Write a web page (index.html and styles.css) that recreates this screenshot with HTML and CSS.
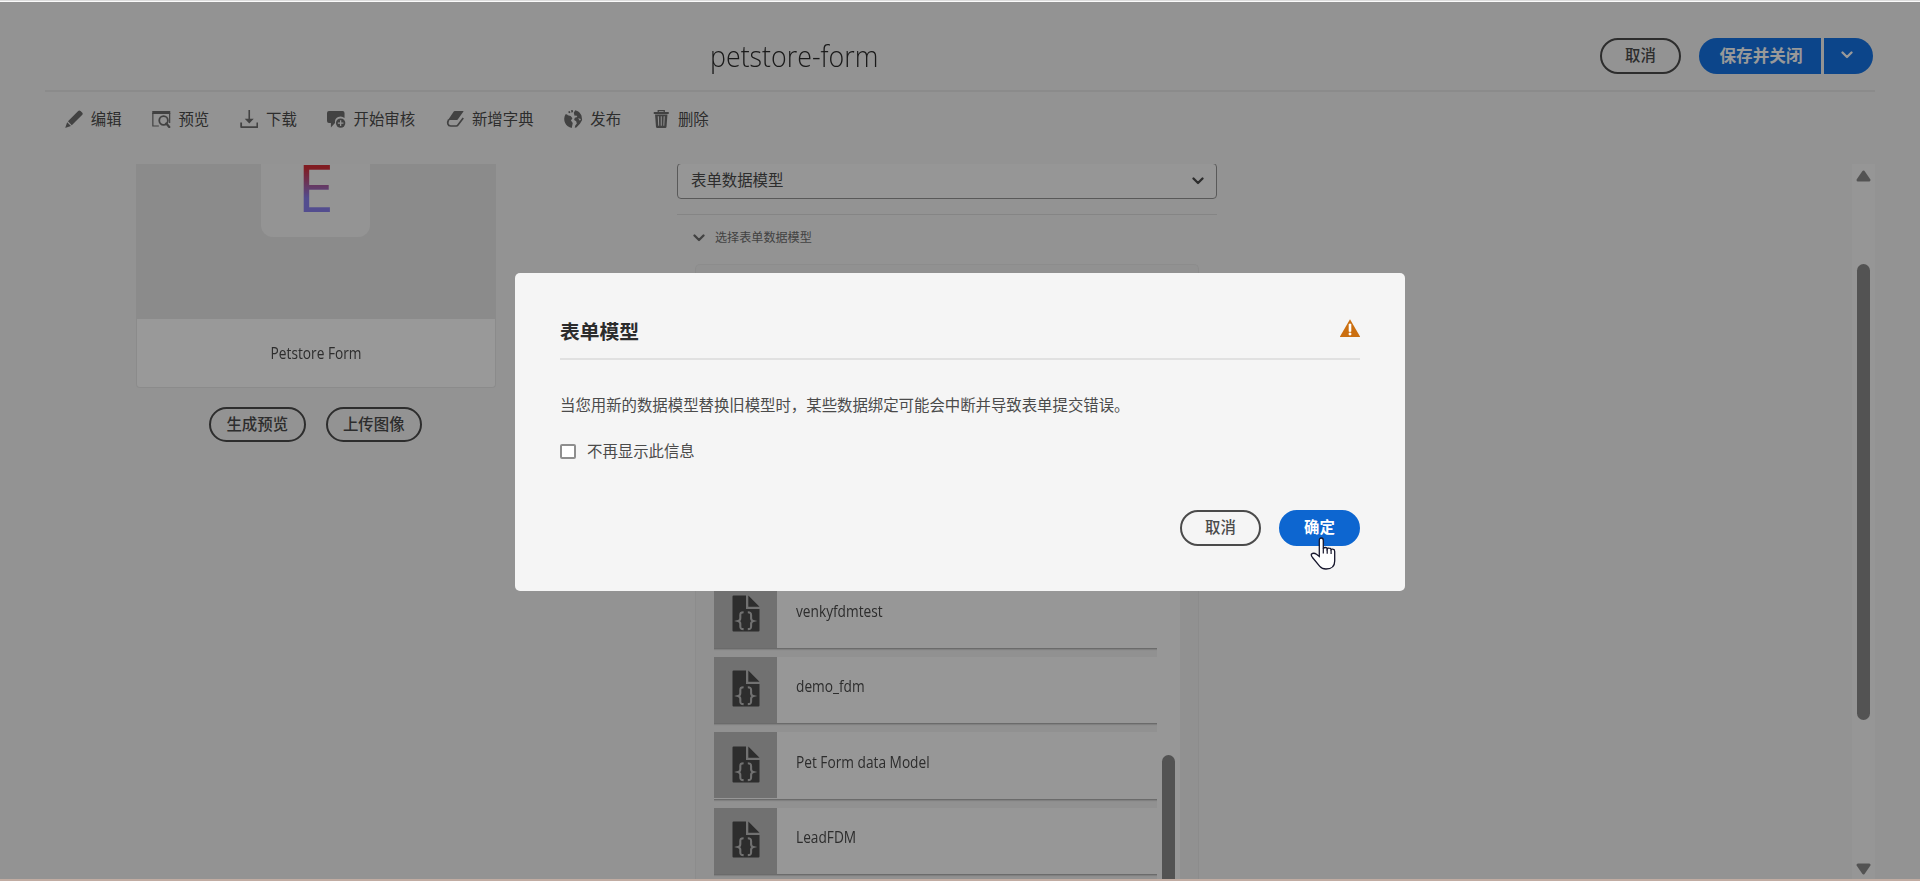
FILE: index.html
```html
<!DOCTYPE html>
<html lang="zh-CN">
<head>
<meta charset="utf-8">
<title>petstore-form</title>
<link rel="stylesheet" href="styles.css">
</head>
<body>
<svg class="defs" width="0" height="0">
  <symbol id="chevron" viewBox="0 0 12 8"><path d="M1.500 1.500 6 6l4.500-4.500" fill="none" stroke="currentColor" stroke-width="2.300" stroke-linecap="round" stroke-linejoin="round"/></symbol>
  <symbol id="file" viewBox="0 0 28 37">
    <path d="M1.500.500H14v13.500h13.500v21.500a1 1 0 0 1-1 1h-25a1 1 0 0 1-1-1v-34a1 1 0 0 1 1-1z" fill="#4b4b4b"/>
    <path d="M16.300.500 27.500 11.800H16.300z" fill="#4b4b4b"/>
    <path d="M11.600 17.200c-3 0-3.300 1-3.300 3v3c0 1.500-.5 2.300-2.300 2.800 1.800.5 2.300 1.300 2.300 2.800v2.400c0 2 .3 2.900 3.300 2.900M15.800 17.200c3 0 3.300 1 3.300 3v3c0 1.500.5 2.300 2.300 2.800-1.800.5-2.300 1.300-2.300 2.800v2.400c0 2-.3 2.900-3.300 2.900" fill="none" stroke="#bcbcbc" stroke-width="2.100"/>
  </symbol>
</svg>
<div class="page">
  <header class="header">
    <h1 class="title"><span>petstore-form</span></h1>
    <div class="header-actions">
      <button class="btn">取消</button>
      <div class="split">
        <button class="split-main">保存并关闭</button>
        <button class="split-more"><svg width="12" height="8"><use href="#chevron"/></svg></button>
      </div>
    </div>
  </header>

  <nav class="toolbar">
    <a class="tool"><svg width="18" height="18" viewBox="0 0 18 18"><path d="M12.700 1.200Q14 0 15.300 1.100l1.500 1.500q1.300 1.200 0 2.500L6.500 15.200 2.700 11.300z"/><path d="M1.900 12.200l3.800 3.700L.500 17.800Q0 17.900.100 17.400z"/></svg>编辑</a>
    <a class="tool"><svg width="18" height="18" viewBox="0 0 18 18"><path d="M0 1h18v3H0z"/><path d="M.6 3v13h6M17.400 3v10" fill="none" stroke="#6e6e6e" stroke-width="1.200"/><circle cx="11.300" cy="10.500" r="4.300" fill="none" stroke="#6e6e6e" stroke-width="1.800"/><path d="M14 13.500l3 3.400" stroke="#6e6e6e" stroke-width="2.300" stroke-linecap="round"/></svg>预览</a>
    <a class="tool"><svg width="18" height="18" viewBox="0 0 18 18"><path d="M8.200 0h1.600v8.700h3.700L9 13.500 4.500 8.700h3.700zM0 12.500h1.800v3.700h14.400v-3.700H18V17q0 1-1 1H1q-1 0-1-1z"/></svg>下载</a>
    <a class="tool"><svg width="19" height="18" viewBox="0 0 19 18"><path d="M2 .8h14q2 0 2 2v5.300A5.800 5.800 0 0 0 8.200 13L4 17.800V13H2q-2 0-2-2V2.800q0-2 2-2z"/><circle cx="14" cy="13.200" r="4.800"/><path d="M14 10.300v5.800M11.100 13.200h5.800" stroke="#f5f5f5" stroke-width="1.300"/></svg>开始审核</a>
    <a class="tool"><svg width="17" height="18" viewBox="0 0 17 18"><path d="M8 1h8.500q.4.200.2.600L11 9.500q-.6.600-1.200.6H2.200q-.8-.1-.4-.8L7 1.600Q7.400 1 8 1z"/><path d="M2 9.500C0 13 1 16 4 16h5.500q1 0 1.700-1L16.500 8" fill="none" stroke="#6e6e6e" stroke-width="1.700"/></svg>新增字典</a>
    <a class="tool"><svg width="18" height="18" viewBox="0 0 18 18"><path d="M1.300 4.300Q3 4 3.600 5.200L6.400 6l1.800 2.300-1.500 2.300 1.800 2.400-1 4.900A9 9 0 0 1 1.300 4.300z"/><path d="M6.700.3 8.500 0l.3 1.900-1.500.8zM3.800 1.700l1.700-.8.700 1.800-1.400.6z"/><path d="M9.500 2.800 11 .2A9 9 0 0 1 17.200 5.500l.7 4.500-2.200 3.700-3.600 3.800-1.600.3.500-2.300 1.600-2.100-.7-2.200-2-1.300.6-2.100 2.600-.8-1-1.400-1.800.1z"/><path d="M13.800 8.200l1.900 2.600 1-1.700z" fill="#f5f5f5"/></svg>发布</a>
    <a class="tool"><svg width="16" height="18" viewBox="0 0 16 18"><path d="M5 2V.6h6V2" fill="none" stroke="#6e6e6e" stroke-width="1.300"/><path d="M.5 2h15v2H.500z"/><path fill-rule="evenodd" d="M1.800 4.500h12.400l-.9 12q-.1 1.500-1.300 1.500H4q-1.200 0-1.300-1.500zM4.500 6.300l.5 9.500h.9l-.3-9.500zM7.500 6.300v9.500h1V6.300zM10.400 6.300l-.3 9.500h.9l.5-9.500z"/></svg>删除</a>
  </nav>

  <main class="content">
    <section class="side">
      <div class="card">
        <div class="card-cover"><div class="tile"><span class="tile-letter">E</span></div></div>
        <div class="card-name"><span class="latin latin-center">Petstore Form</span></div>
      </div>
      <div class="side-actions">
        <button class="btn btn-side">生成预览</button>
        <button class="btn btn-side">上传图像</button>
      </div>
    </section>

    <section class="model">
      <div class="select">表单数据模型<svg width="12" height="8"><use href="#chevron"/></svg></div>
      <div class="accordion"><svg width="12" height="8"><use href="#chevron"/></svg>选择表单数据模型</div>
      <div class="panel">
        <div class="list">
          <div class="rows">
            <div class="row"><div class="row-card"><div class="thumb"><svg width="28" height="37"><use href="#file"/></svg></div><span class="latin">venkyfdmtest</span></div></div>
            <div class="row"><div class="row-card"><div class="thumb"><svg width="28" height="37"><use href="#file"/></svg></div><span class="latin">demo_fdm</span></div></div>
            <div class="row"><div class="row-card"><div class="thumb"><svg width="28" height="37"><use href="#file"/></svg></div><span class="latin">Pet Form data Model</span></div></div>
            <div class="row"><div class="row-card"><div class="thumb"><svg width="28" height="37"><use href="#file"/></svg></div><span class="latin">LeadFDM</span></div></div>
          </div>
          <div class="list-thumb"></div>
        </div>
      </div>
    </section>

    <div class="scrollbar">
      <svg width="15" height="12" viewBox="0 0 15 12"><path d="M7.500 2 13 10H2z"/></svg>
      <div class="scroll-thumb"></div>
      <svg class="arrow-down" width="15" height="12" viewBox="0 0 15 12"><path d="M7.500 10 13 2H2z"/></svg>
    </div>
  </main>
</div>

<div class="overlay">
  <div class="dialog">
    <div class="dialog-head">
      <h2>表单模型</h2>
      <svg width="20" height="18" viewBox="0 0 20 18"><path d="M10 .300 20 17.500V18H0v-.500z" fill="#cb6f10"/><path d="M9 5h2v7.500H9zM9 14h2v2H9z" fill="#fff" stroke="#fff" stroke-width=".6"/></svg>
    </div>
    <p class="dialog-text">当您用新的数据模型替换旧模型时，某些数据绑定可能会中断并导致表单提交错误。</p>
    <label class="check"><span class="box"></span><span class="check-label">不再显示此信息</span></label>
    <div class="dialog-actions">
      <button class="btn">取消</button>
      <button class="btn btn-primary">确定</button>
    </div>
  </div>
</div>
<svg class="cursor" width="27" height="34" viewBox="0 0 27 34"><path d="M9.300 3.500Q9.300 1 11.300 1t2 2.500v8q.2-1 1.800-1 2 0 2.100 1.300.4-.8 1.900-.6 1.900.1 2 1.300.5-.5 1.700-.3 1.900.2 1.900 2.300V24q0 8-8.700 8-4 0-6.200-2.700L2.500 20.500Q.7 17.800 1.500 17q2.300-1.600 5 .3l2.800 2.200z" fill="#fff" stroke="#16162c" stroke-width="1.300"/><path d="M13.300 11v5.500M17.200 11.800v5M21.100 12.500v4.500" stroke="#16162c" stroke-width="1.200"/></svg>
<div class="edge-top"></div>
<div class="edge-bottom"></div>
</body>
</html>
```

FILE: styles.css
```css
* { box-sizing: border-box; }
body {
  margin: 0;
  width: 1920px;
  height: 881px;
  overflow: hidden;
  background: #f5f5f5;
  color: #4b4b4b;
  font: 15.4px/20px "Open Sans", "Noto Sans CJK SC", sans-serif;
}
button { font-family: inherit; padding: 0; }
svg { display: block; flex: none; }
.defs { position: absolute; }

.page { display: flex; flex-direction: column; height: 881px; padding: 2px 45px; }

.header {
  display: flex;
  height: 90px;
  border-bottom: 2px solid #e8e8e8;
}
.title {
  flex: 1;
  margin: 0;
  padding: 34px 0 0 665px;
  font-size: 30px;
  line-height: 40px;
  font-weight: 300;
  color: #2c2c2c;
}
.title span { display: inline-block; transform: scaleX(.893); transform-origin: left; }
.header-actions { display: flex; gap: 18px; padding: 36px 2px 0 0; }

.btn {
  width: 81px;
  height: 36px;
  border: 2px solid #4b4b4b;
  border-radius: 18px;
  background: transparent;
  color: #4b4b4b;
  font-size: 15.4px;
  line-height: 30px;
  font-weight: 500;
}
.split { display: flex; gap: 3px; }
.split-main, .split-more { height: 36px; border: 0; background: #1473e6; color: #fff; }
.split-main { width: 122px; padding-left: 2px; border-radius: 18px 0 0 18px; font-size: 16.6px; font-weight: 700; line-height: 34px; }
.split-more { display: flex; align-items: center; justify-content: center; width: 49px; padding: 0 3px 2px 0; border-radius: 0 18px 18px 0; }

.toolbar { display: flex; height: 72px; padding: 18px 0 0 19.500px; gap: 30.500px; color: #4b4b4b; }
.tool { display: flex; height: 20px; align-items: center; gap: 7.800px; }
.tool svg { width: 18.500px; margin-top: -2px; fill: #6e6e6e; }

.content { display: flex; height: 715px; }
.side { width: 360px; margin-left: 91px; }
.card { height: 224px; border: 1px solid #e8e8e8; border-top: 0; border-radius: 0 0 4px 4px; background: #fff; }
.card-cover { height: 155px; background: #e8e8e8; display: flex; justify-content: center; padding-right: 1px; }
.tile { width: 109px; height: 73px; border-radius: 0 0 12px 12px; background: #f7f7f7; display: flex; justify-content: center; }
.tile-letter {
  height: 90px;
  margin-top: -23px;
  font-size: 66px;
  line-height: 90px;
  color: transparent;
  background: linear-gradient(#d7303a 27px, #8a80ee 57px);
  -webkit-background-clip: text;
  background-clip: text;
}
.card-name { display: flex; height: 68px; padding-top: 2px; align-items: center; justify-content: center; }
.latin { display: inline-block; transform: scaleX(.89); transform-origin: left; white-space: nowrap; }
.latin-center { transform-origin: center; }
.side-actions { display: flex; justify-content: center; gap: 20px; margin-top: 19px; padding-right: 1px; }
.btn-side { width: 96.500px; height: 35px; line-height: 29px; }

.model { width: 540px; margin-left: 181px; }
.select {
  display: flex;
  align-items: center;
  justify-content: space-between;
  height: 36px;
  margin-top: -1px;
  padding: 0 12px 0 13px;
  border: 1px solid #959595;
  border-radius: 4px;
  background: #fafafa;
  clip-path: inset(1px 0 0);
}
.accordion {
  display: flex;
  align-items: center;
  gap: 10.500px;
  height: 50px;
  margin-top: 15px;
  padding: 0 0 3px 15.500px;
  border-top: 1px solid #dedede;
  font-size: 12.1px;
  color: #6e6e6e;
}
.panel { width: 504px; height: 615px; margin-left: 18px; padding: 160px 18px 0; border: 1px solid #eaeaea; border-bottom: 0; border-radius: 5px 5px 0 0; background: #f2f2f2; }
.list { display: flex; height: 454px; padding-top: 156.6px; background: #fcfcfc; }
.rows { width: 443px; height: 297.4px; overflow: hidden; }
.row { height: 75.350px; background: #f2f2f2; }
.row-card { display: flex; height: 66.500px; background: #fcfcfc; box-shadow: 0 1px 0 #b2b2b2, 0 2px 1px #d5d5d5; }
.thumb { width: 63px; height: 66px; padding: 13.500px 0 0 18px; background: #bcbcbc; }
.row-card .latin { margin: 20.500px 0 0 18.500px; }
.list-thumb { width: 13px; height: 124.4px; margin: 173px 0 0 5px; border-radius: 7px 7px 0 0; background: #8b8b8b; }

.scrollbar { display: flex; flex-direction: column; align-items: center; width: 23px; height: 715px; margin-left: auto; padding-top: 6px; background: #fafafa; }
.scrollbar path { fill: #8b8b8b; stroke: #8b8b8b; stroke-width: 3; stroke-linejoin: round; }
.scroll-thumb { width: 13px; height: 456px; margin-top: 82px; border-radius: 7px; background: #8b8b8b; }
.arrow-down { margin-top: 143px; }

.overlay { position: absolute; inset: 0; background: rgba(0, 0, 0, .4); }
.dialog { width: 890px; height: 318px; margin: 273px 0 0 515px; padding: 43px 45px 0; border-radius: 5px; background: #f5f5f5; }
.dialog-head { display: flex; justify-content: space-between; height: 44px; padding-top: 3px; border-bottom: 2px solid #e1e1e1; }
.dialog-head h2 { margin: 1px 0 0; font-size: 19.8px; line-height: 24px; font-weight: 700; color: #2c2c2c; }
.dialog-text { margin: 36px 0 0; }
.check { display: flex; align-items: center; gap: 11px; height: 20px; margin-top: 25px; }
.check-label { padding-top: 2px; }
.box { width: 16px; height: 15px; border: 2px solid #8e8e8e; border-radius: 2px; background: #fff; }
.dialog-actions { display: flex; justify-content: flex-end; gap: 18px; margin-top: 49px; }
.btn-primary { border-color: #0d66d0; background: #0d66d0; color: #fff; font-weight: 700; }

.cursor { position: absolute; left: 1309.500px; top: 536.500px; }
.edge-top, .edge-bottom { position: absolute; left: 0; right: 0; height: 2px; }
.edge-top { top: 0; border-top: 1px solid #dcdcdc; background: #fafafa; }
.edge-bottom { bottom: 0; background: #c1aca2; }
```
